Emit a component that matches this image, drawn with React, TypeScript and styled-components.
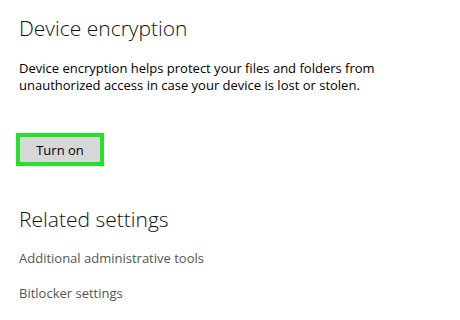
import React from 'react';
import styled, {createGlobalStyle} from 'styled-components';

const GlobalStyle = createGlobalStyle`
  html, body {
    margin: 0;
    background: #ffffff;
  }
  body {
    font-family: "Open Sans", "Noto Sans", sans-serif;
    color: #000;
  }
`;

const Page = styled.main`
  width: 460px;
  height: 320px;
  box-sizing: border-box;
  padding: 14px 19px 0;
  overflow: hidden;
`;

const Heading = styled.h2`
  margin: 0;
  font-size: 21px;
  line-height: 28px;
  font-weight: 300;
  color: #111;
`;

const Description = styled.p`
  margin: 18px 0 0;
  font-size: 13px;
  line-height: 17px;
  width: 380px;
`;

const ButtonFrame = styled.div`
  margin: 39px 0 0 -3px;
  display: inline-block;
  border: 4px solid #22e22a;
`;

const Button = styled.button`
  display: block;
  width: 80px;
  height: 25px;
  border: none;
  background: #d7d7d7;
  font-family: inherit;
  font-size: 13px;
  color: #000;
  padding: 0;
`;

const Section = styled.section`
  margin-top: 39px;
`;

const LinkList = styled.ul`
  list-style: none;
  margin: 16px 0 0;
  padding: 0;
  display: flex;
  flex-direction: column;
  gap: 17px;
  > li {
    font-size: 13px;
    line-height: 18px;
    color: #555;
  }
`;

function App() {
  return (
    <Page>
      <GlobalStyle/>
      <Heading>Device encryption</Heading>
      <Description>
        Device encryption helps protect your files and folders from unauthorized access in case your device is lost or stolen.
      </Description>
      <ButtonFrame>
        <Button>Turn on</Button>
      </ButtonFrame>
      <Section>
        <Heading>Related settings</Heading>
        <LinkList>
          <li>Additional administrative tools</li>
          <li>Bitlocker settings</li>
        </LinkList>
      </Section>
    </Page>
  );
}

export default App;
